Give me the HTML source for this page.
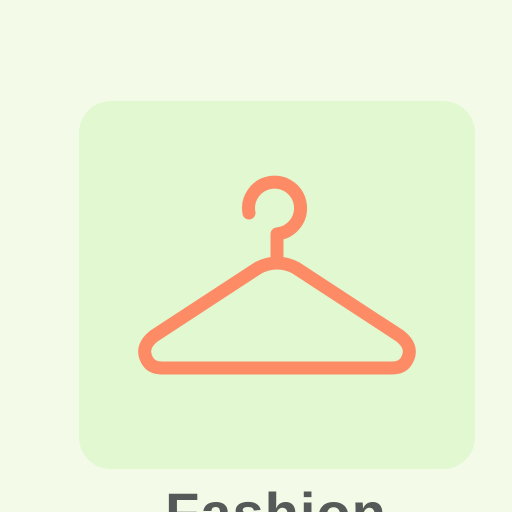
<!DOCTYPE html>
<html><head><style>
html,body{margin:0;padding:0;width:512px;height:512px;overflow:hidden;background:#f3fae8;}
.wrap{position:relative;width:512px;height:512px;overflow:hidden;}
.card{position:absolute;left:79px;top:101px;width:396px;height:368px;border-radius:32px;background:#e1f8d1;}
.t{position:absolute;left:0;width:552px;top:485px;height:27px;overflow:hidden;text-align:center;font-family:"Liberation Sans",sans-serif;font-size:56px;line-height:1;color:#555a58;font-weight:bold;letter-spacing:1px;}
svg{position:absolute;left:0;top:0}
</style></head><body>
<div class="wrap">
<div class="card"></div>
<svg width="512" height="512" viewBox="0 0 512 512">
<path d="M249 213 A26 26 0 1 1 277 234 L277 262" fill="none" stroke="#fc8b66" stroke-width="13" stroke-linecap="round" stroke-linejoin="round"/>
<path d="M258 268 Q277 258 296 268 L400 336 Q414 347 407 360 Q403 368 392 368 L162 368 Q151 368 147 360 Q140 347 154 336 Z" fill="none" stroke="#fc8b66" stroke-width="13" stroke-linejoin="round"/>
</svg>
<div class="t">Fashion</div>
</div>
</body></html>
